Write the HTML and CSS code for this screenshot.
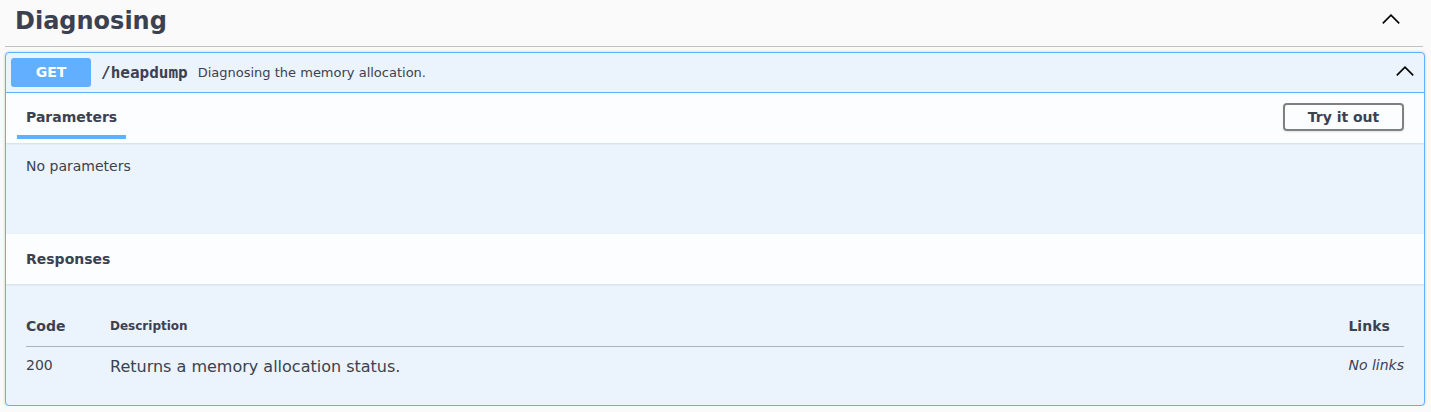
FILE: index.html
```html
<!DOCTYPE html>
<html>
<head>
<meta charset="utf-8">
<link rel="stylesheet" href="styles.css">
</head>
<body>
<div class="wrapper">
  <div class="tag">
    <h3 class="tag-title">Diagnosing</h3>
    <svg class="arrow tag-arrow" viewBox="0 0 18 10" width="18" height="10"><polyline points="0.8,9.4 9,1.2 17.2,9.4"/></svg>
  </div>
  <div class="opblock">
    <div class="summary">
      <span class="method">GET</span>
      <span class="path">/heapdump</span>
      <span class="summary-desc">Diagnosing the memory allocation.</span>
      <svg class="arrow op-arrow" viewBox="0 0 18 10" width="18" height="10"><polyline points="0.8,9.4 9,1.2 17.2,9.4"/></svg>
    </div>
    <div class="section-header">
      <div class="tab"><h4 class="tab-title"><span class="tab-label">Parameters</span></h4></div>
      <button class="try-btn">Try it out</button>
    </div>
    <div class="params-body">
      <p class="no-params">No parameters</p>
    </div>
    <div class="section-header responses-header">
      <h4 class="section-title">Responses</h4>
    </div>
    <div class="responses-inner">
      <table class="responses-table">
        <thead>
          <tr>
            <th class="col-code">Code</th>
            <th class="col-desc">Description</th>
            <th class="col-links">Links</th>
          </tr>
        </thead>
        <tbody>
          <tr>
            <td class="col-code code-val">200</td>
            <td class="col-desc desc-val">Returns a memory allocation status.</td>
            <td class="col-links links-val">No links</td>
          </tr>
        </tbody>
      </table>
    </div>
  </div>
</div>
</body>
</html>
```

FILE: styles.css
```css
html, body {
  margin: 0;
  padding: 0;
  background: #fafafa;
}
body {
  font-family: "DejaVu Sans", sans-serif;
  color: #3b4151;
}
.wrapper {
  padding: 0 6px 0 5px;
}
.tag {
  display: flex;
  align-items: center;
  height: 46px;
  border-bottom: 1px solid rgba(59, 65, 81, 0.3);
  padding: 0 23px 0 10px;
  margin-bottom: 5px;
  margin-right: 2px;
}
.tag-title {
  flex: 1;
  margin: 0;
  font-size: 24px;
  font-weight: 700;
  color: #3b4151;
  position: relative;
  top: -2px;
}
.arrow {
  fill: none;
  stroke: #000;
  stroke-width: 1.6;
}
.tag-arrow {
  position: relative;
  top: -4px;
}
.opblock {
  border: 1px solid #61affe;
  border-radius: 4px;
  background: #ebf3fc;
  box-shadow: 0 0 3px rgba(0, 0, 0, 0.19);
  overflow: hidden;
}
.summary {
  display: flex;
  align-items: center;
  padding: 5px;
  border-bottom: 1px solid #61affe;
  height: 29px;
}
.method {
  min-width: 80px;
  padding: 6px 0;
  text-align: center;
  background: #61affe;
  color: #fff;
  font-size: 14px;
  font-weight: 700;
  border-radius: 3px;
  line-height: 17px;
}
.path {
  font-family: "DejaVu Sans Mono", monospace;
  font-weight: 700;
  font-size: 16px;
  padding: 0 10px;
  color: #3b4151;
}
.summary-desc {
  flex: 1;
  font-size: 13px;
  color: #3b4151;
}
.op-arrow {
  margin-right: 5px;
  position: relative;
  top: -2px;
}
.section-header {
  display: flex;
  align-items: center;
  min-height: 50px;
  box-sizing: border-box;
  padding: 8px 20px;
  background: rgba(255, 255, 255, 0.8);
  box-shadow: 0 1px 2px rgba(0, 0, 0, 0.1);
  position: relative;
}
.tab {
  flex: 1;
}
.tab-title {
  margin: 0;
  font-size: 14px;
  font-weight: 700;
  position: relative;
  top: -1px;
}
.tab-label {
  position: relative;
}
.tab-label::after {
  content: "";
  position: absolute;
  left: -10%;
  width: 120%;
  bottom: -14px;
  height: 4px;
  background: #61affe;
}
.try-btn {
  font-family: "DejaVu Sans", sans-serif;
  font-size: 14px;
  font-weight: 700;
  color: #3b4151;
  background: transparent;
  border: 2px solid #808080;
  border-radius: 4px;
  width: 121px;
  height: 28px;
  padding: 0;
  box-shadow: 0 1px 2px rgba(0, 0, 0, 0.1);
  position: relative;
  top: -1px;
}
.params-body {
  padding: 15px 20px;
  height: 61px;
}
.no-params {
  margin: 0;
  font-size: 14px;
  line-height: 16px;
}
.section-title {
  margin: 0;
  font-size: 14px;
  font-weight: 700;
}
.responses-inner {
  padding: 22px 20px 18px 20px;
}
.responses-table {
  width: 100%;
  border-collapse: collapse;
}
.responses-table th {
  text-align: left;
  font-weight: 700;
  padding: 12px 0;
  border-bottom: 1px solid rgba(59, 65, 81, 0.2);
}
.responses-table th.col-code {
  font-size: 14px;
  width: 84px;
}
.responses-table th.col-desc {
  font-size: 12px;
}
.responses-table th.col-links {
  font-size: 14px;
  width: 55px;
}
.responses-table td {
  padding: 10px 0 11px;
  vertical-align: top;
}
.code-val {
  font-size: 14px;
}
.desc-val {
  font-size: 16px;
}
.links-val {
  font-size: 14px;
  font-style: italic;
  white-space: nowrap;
}
```
